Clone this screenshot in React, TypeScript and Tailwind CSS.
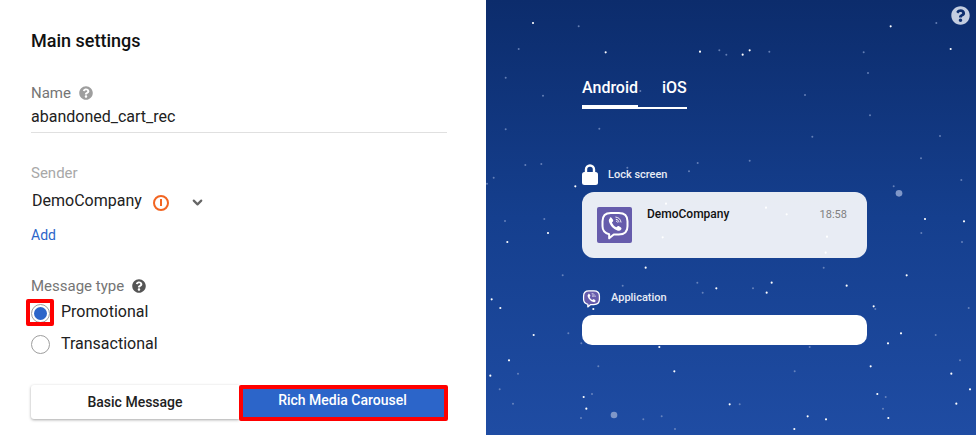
import { FaQuestionCircle } from "react-icons/fa";
import { ChevronDown } from "lucide-react";

const brightStars = [
  [141, 69], [359, 157], [642, 155], [791, 151], [770, 164], [1214, 79], [1394, 147], [268, 559], [186, 699],
  [64, 726], [1317, 657], [1434, 664], [479, 803], [691, 865], [857, 848], [842, 878], [1082, 857], [1262, 826],
  [1163, 919], [17, 898], [43, 924], [143, 1005], [69, 1081], [13, 1127], [520, 1041], [565, 1114], [1206, 1030],
  [1245, 1000], [1154, 1099], [1396, 1121], [1452, 1168], [1174, 1182], [1411, 1211], [1207, 1254], [293, 1191],
  [301, 1226], [731, 1213], [965, 1249], [1020, 1258], [925, 1287], [322, 927], [540, 611], [840, 623], [902, 643],
  [530, 712], [1023, 710], [1019, 758],
];

const faintStars = [
  [278, 79], [98, 147], [59, 233], [171, 287], [59, 388], [340, 386], [118, 495], [166, 492], [23, 533], [3, 551],
  [57, 663], [175, 657], [230, 826], [700, 151], [721, 164], [850, 155], [1133, 157], [1146, 219], [957, 285],
  [1152, 346], [979, 410], [1362, 408], [1305, 475], [791, 482], [635, 489], [609, 514], [424, 503], [1426, 540],
  [1223, 559], [1306, 699], [1428, 726], [1351, 69], [1013, 803], [634, 848], [650, 878], [801, 865], [410, 857],
  [1168, 927], [1448, 924], [1349, 1005], [971, 1041], [247, 1000], [286, 1030], [96, 1121], [41, 1168], [81, 1211],
  [337, 1099], [926, 1114], [1422, 1081], [318, 1182], [285, 1254], [472, 1258], [527, 1249], [761, 1213],
  [1199, 1191], [1191, 1226], [567, 1287], [463, 273],
];

function Stars() {
  return (
    <svg className="absolute inset-0" width="490" height="435" viewBox="0 0 1470 1305">
      {faintStars.map(([x, y]) => (
        <circle key={`${x}-${y}`} cx={x} cy={y} r="3" fill="#7f97c8" opacity="0.75" />
      ))}
      {brightStars.map(([x, y]) => (
        <circle key={`${x}-${y}`} cx={x} cy={y} r="3.2" fill="#ffffff" />
      ))}
      <circle cx="1239" cy="580" r="10" fill="#7f97c8" />
      <circle cx="384" cy="1245" r="10" fill="#7f97c8" />
    </svg>
  );
}

function ViberGlyph({ size, fill }: { size: number; fill: string }) {
  return (
    <svg width={size} height={size} viewBox="0 0 36 36" fill="none">
      <path
        d="M13 3.5h9.5c6.5 0 10.5 3.6 10.5 10v6c0 6.4-4 10-10.5 10h-6L11 34v-5c-5-1.2-8-4.4-8-9.5v-6c0-6.4 3.6-10 10-10z"
        fill={fill}
        stroke="#ffffff"
        strokeWidth="2.4"
        strokeLinejoin="round"
      />
      <path
        d="M11.6 9.2c.8-.6 1.8-.5 2.4.3l1.6 2.3c.5.8.4 1.6-.3 2.2l-1 .8c.6 2.6 2.8 5 5.4 6l.9-1c.6-.7 1.5-.8 2.3-.3l2.2 1.6c.8.6.9 1.6.3 2.4-1 1.3-2.4 1.8-3.9 1.3-5.2-1.7-9.3-5.9-10.8-11-.4-1.8.5-3.4 1.9-4.4z"
        fill="#ffffff"
      />
      <path
        d="M19 8.5c3.4.3 5.8 2.6 6.2 6M19.4 11.2c1.9.2 3 1.4 3.3 3.2M19.8 13.4c.6.1 1 .5 1.1 1.1"
        stroke="#ffffff"
        strokeWidth="1.1"
        strokeLinecap="round"
      />
    </svg>
  );
}

function Radio({ checked, label, marked }: { checked?: boolean; label: string; marked?: boolean }) {
  return (
    <label className="flex h-[31px] items-center gap-[11px]">
      <span
        className={`relative flex h-[19px] w-[19px] items-center justify-center rounded-full border border-[#9e9e9e] bg-white ${
          marked ? "mt-[4px]" : "mt-[2px]"
        }`}
      >
        {checked && <span className="h-[13px] w-[13px] rounded-full bg-[#2c65c9]" />}
        {marked && (
          <span className="absolute -top-[6px] -right-[5px] -bottom-[4px] -left-[6px] rounded-[2px] border-4 border-[#ff0000]" />
        )}
      </span>
      <span className="text-base text-[#212121]">{label}</span>
    </label>
  );
}

export default function App() {
  return (
    <div className="flex h-[435px] w-[976px] overflow-hidden bg-white font-['Roboto',sans-serif]">
      {/* Settings form */}
      <div className="w-[486px] shrink-0 pl-[31px] pr-[39px] pt-[29px]">
        <h1 className="text-lg leading-6 font-medium text-[#111]">Main settings</h1>

        <div className="mt-[30px] flex items-center gap-2 text-[15px] leading-5 text-[#757575]">
          Name
          <FaQuestionCircle className="h-[14px] w-[14px] text-[#9e9e9e]" />
        </div>
        <div className="h-[30px] border-b border-[#e0e0e0] pt-[4px] text-base leading-5 text-[#212121]">
          abandoned_cart_rec
        </div>

        <div className="mt-[30px] text-[15px] leading-5 text-[#a8a8a8]">Sender</div>
        <div className="mt-[8px] flex h-5 items-center pl-px text-base text-[#212121]">
          DemoCompany
          <span className="mt-[3px] ml-[11px] flex h-4 w-4 items-center justify-center rounded-full border-2 border-[#f26522]">
            <span className="h-[7px] w-[2px] bg-[#f26522]" />
          </span>
          <ChevronDown className="mt-[3px] ml-[21px] text-[#666]" size={15} strokeWidth={3.5} />
        </div>
        <a className="mt-[14px] block text-sm leading-5 text-[#2c65c9]">Add</a>

        <div className="mt-[31px] flex items-center gap-2 text-[15px] leading-5 text-[#757575]">
          Message type
          <FaQuestionCircle className="h-[14px] w-[14px] text-[#555]" />
        </div>
        <div className="flex flex-col gap-px">
          <Radio checked marked label="Promotional" />
          <Radio label="Transactional" />
        </div>

        <div className="mt-[26px] flex">
          <button className="h-[34px] w-[208px] shrink-0 rounded-l-[3px] bg-white text-sm font-medium text-[#212121] shadow-[0_1px_3px_rgba(0,0,0,0.35)]">
            Basic Message
          </button>
          <button className="h-9 w-[209px] shrink-0 rounded-[2px] border-4 border-[#ff0000] bg-[#2c65c9] pr-[2px] pb-[7px] text-sm font-medium text-white">
            Rich Media Carousel
          </button>
        </div>
      </div>

      {/* Phone preview */}
      <div className="relative flex-1 bg-gradient-to-b from-[#0c2c6c] via-[#153f8e] to-[#1f4ca3] pl-[96px] pt-[78px]">
        <Stars />
        <FaQuestionCircle className="absolute top-[6px] right-[6px] h-[19px] w-[19px] text-[#c3cde0]" />

        <div className="relative w-[285px]">
          <div className="flex w-[105px] gap-6 border-b-2 border-white text-base font-medium text-white">
            <span className="-mb-[2px] h-[31px] w-[56px] border-b-4 border-white leading-5">Android</span>
            <span className="leading-5">iOS</span>
          </div>

          <div className="mt-[55px] flex h-[21px] items-center gap-[10px] text-[11px] font-medium text-[#e8ecf5]">
            <svg width="16" height="21" viewBox="0 0 16 21" fill="none">
              <path d="M4 9V5.5a4 4 0 0 1 8 0V9" stroke="#ffffff" strokeWidth="2.4" />
              <rect x="0" y="8" width="16" height="13" rx="2.5" fill="#ffffff" />
            </svg>
            <span className="pt-[2px]">Lock screen</span>
          </div>

          <div className="mt-[7px] flex h-[66px] rounded-[12px] bg-white/90 pl-[15px] pr-5 pt-[15px]">
            <div className="flex h-9 w-[35px] items-center justify-center rounded-[2px] bg-[#665cac]">
              <ViberGlyph size={30} fill="none" />
            </div>
            <span className="-mt-px ml-[15px] text-xs leading-4 font-medium text-[#111]">DemoCompany</span>
            <span className="ml-auto text-[11px] leading-4 text-[#808080]">18:58</span>
          </div>

          <div className="mt-[30px] flex h-5 items-center gap-[10px] text-[11px] font-medium text-[#e8ecf5]">
            <ViberGlyph size={19} fill="#665cac" />
            Application
          </div>

          <div className="mt-[7px] h-[30px] rounded-[10px] bg-white" />
        </div>
      </div>
    </div>
  );
}
